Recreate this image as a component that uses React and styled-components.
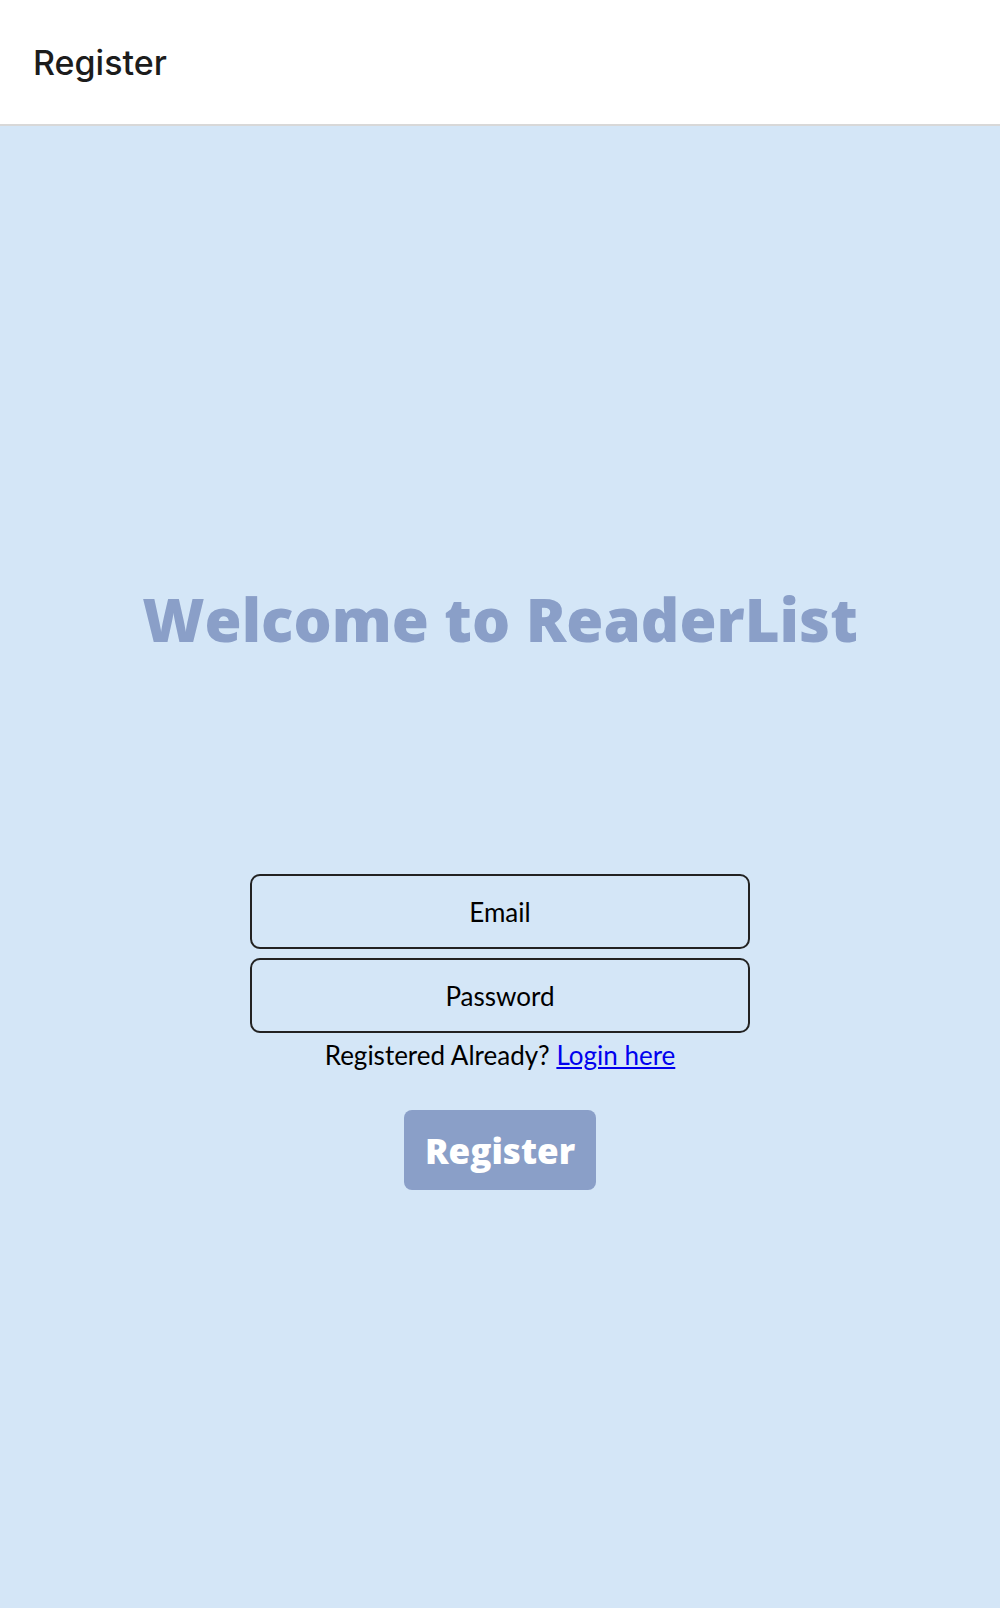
import React from 'react';
import styled, { createGlobalStyle } from 'styled-components';

const GlobalStyle = createGlobalStyle`
    html, body {
        margin: 0;
        padding: 0;
        background: #d4e6f7;
    }
    #root {
        min-height: 100vh;
    }
`;

const Page = styled.div`
    min-height: 100vh;
    display: flex;
    flex-direction: column;
    background: #d4e6f7;
    font-family: Lato, "Open Sans", sans-serif;
`;

const TopBar = styled.header`
    height: 124px;
    display: flex;
    align-items: center;
    padding-left: 33px;
    background: #ffffff;
    border-bottom: 2px solid #d8d8d8;
`;

const TopBarTitle = styled.h1`
    margin: 0;
    font-family: Inter, "Liberation Sans", sans-serif;
    font-size: 34px;
    font-weight: 500;
    color: #1c1c1c;
`;

const Main = styled.main`
    flex: 1;
    display: flex;
    flex-direction: column;
    align-items: center;
`;

const Welcome = styled.h2`
    margin: 463px 0 0;
    font-family: "Open Sans", Lato, sans-serif;
    font-size: 60px;
    line-height: 1;
    font-weight: 800;
    color: #8a9fc8;
`;

const Form = styled.form`
    width: 500px;
    margin-top: 225px;
    display: flex;
    flex-direction: column;
    align-items: center;
    gap: 9px;
`;

const Field = styled.input`
    box-sizing: border-box;
    width: 100%;
    height: 75px;
    border: 2px solid #222;
    border-radius: 10px;
    background: transparent;
    text-align: center;
    font-family: Lato, sans-serif;
    font-size: 26px;
    color: #000;
    outline: none;

    &::placeholder {
        color: #000;
        opacity: 1;
    }
`;

const Note = styled.p`
    margin: 0;
    font-size: 26px;
    line-height: 1.05;
    color: #000;
`;

const LoginLink = styled.a`
    color: #0000ee;
    text-decoration: underline;
`;

const SubmitButton = styled.button`
    margin-top: 32px;
    width: 192px;
    height: 80px;
    border: none;
    border-radius: 8px;
    background: #8a9fc8;
    color: #fff;
    font-family: "Open Sans", Lato, sans-serif;
    font-size: 35px;
    font-weight: 800;
    cursor: pointer;
`;

const App = () => {
    return (
        <Page>
            <GlobalStyle />
            <TopBar>
                <TopBarTitle>Register</TopBarTitle>
            </TopBar>
            <Main>
                <Welcome>Welcome to ReaderList</Welcome>
                <Form onSubmit={(e) => e.preventDefault()}>
                    <Field type="email" placeholder="Email" />
                    <Field type="password" placeholder="Password" />
                    <Note>
                        Registered Already? <LoginLink href="#">Login here</LoginLink>
                    </Note>
                    <SubmitButton type="submit">Register</SubmitButton>
                </Form>
            </Main>
        </Page>
    );
};

export default App;
